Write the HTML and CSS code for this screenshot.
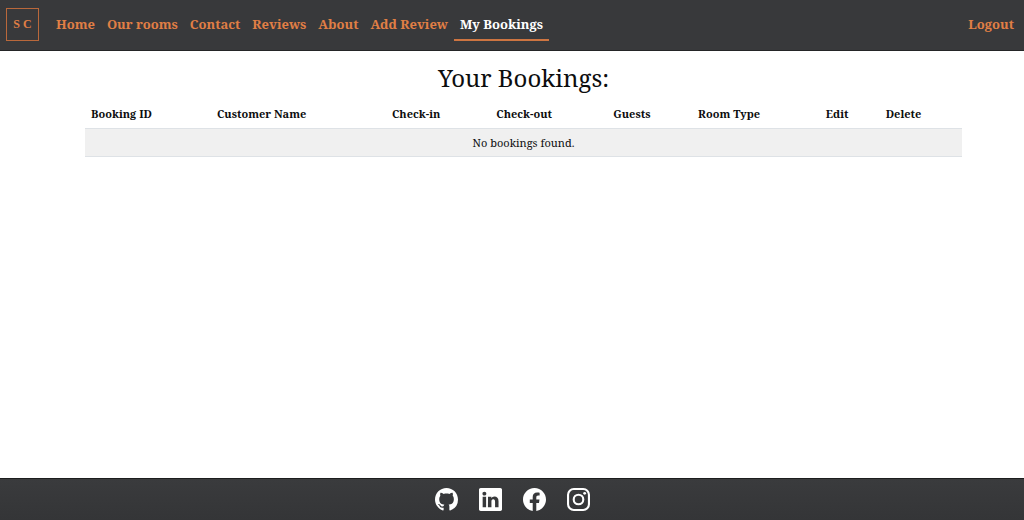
FILE: index.html
```html
<!DOCTYPE html>
<html lang="en">
<head>
<meta charset="utf-8">
<title>My Bookings</title>
<link rel="stylesheet" href="styles.css">
</head>
<body>
<header class="navbar">
  <a class="logo" href="#">S C</a>
  <nav class="menu">
    <a class="link" href="#">Home</a>
    <a class="link" href="#">Our rooms</a>
    <a class="link" href="#">Contact</a>
    <a class="link" href="#">Reviews</a>
    <a class="link" href="#">About</a>
    <a class="link" href="#">Add Review</a>
    <a class="link active" href="#" aria-current="page">My Bookings</a>
  </nav>
  <a class="link logout" href="#">Logout</a>
</header>
<main class="content">
  <h1 class="title">Your Bookings:</h1>
  <table class="bookings">
    <thead><tr><th>Booking ID</th><th>Customer Name</th><th>Check-in</th><th>Check-out</th><th>Guests</th><th>Room Type</th><th>Edit</th><th>Delete</th></tr></thead>
    <tbody><tr><td colspan="8">No bookings found.</td></tr></tbody>
  </table>
</main>
<footer class="footer">
  <a class="social" href="#" aria-label="GitHub"><svg viewBox="0 0 16 16"><path d="M8 0C3.58 0 0 3.58 0 8c0 3.54 2.29 6.53 5.47 7.59.4.07.55-.17.55-.38 0-.19-.01-.82-.01-1.49-2.01.37-2.53-.49-2.69-.94-.09-.23-.48-.94-.82-1.13-.28-.15-.68-.52-.01-.53.63-.01 1.08.58 1.23.82.72 1.21 1.87.87 2.33.66.07-.52.28-.87.51-1.07-1.78-.2-3.64-.89-3.64-3.95 0-.87.31-1.59.82-2.15-.08-.2-.36-1.02.08-2.12 0 0 .67-.21 2.2.82.64-.18 1.32-.27 2-.27s1.36.09 2 .27c1.53-1.04 2.2-.82 2.2-.82.44 1.1.16 1.92.08 2.12.51.56.82 1.27.82 2.15 0 3.07-1.87 3.75-3.65 3.95.29.25.54.73.54 1.48 0 1.07-.01 1.93-.01 2.2 0 .21.15.46.55.38A8.01 8.01 0 0 0 16 8c0-4.42-3.58-8-8-8"/></svg></a>
  <a class="social" href="#" aria-label="LinkedIn"><svg viewBox="0 0 16 16"><path d="M0 1.146C0 .513.526 0 1.175 0h13.65C15.474 0 16 .513 16 1.146v13.708c0 .633-.526 1.146-1.175 1.146H1.175C.526 16 0 15.487 0 14.854zm4.943 12.248V6.169H2.542v7.225zm-1.2-8.212c.837 0 1.358-.554 1.358-1.248-.015-.709-.52-1.248-1.342-1.248S2.4 3.226 2.4 3.934c0 .694.521 1.248 1.327 1.248zm4.908 8.212V9.359c0-.216.016-.432.08-.586.173-.431.568-.878 1.232-.878.869 0 1.216.662 1.216 1.634v3.865h2.401V9.25c0-2.22-1.184-3.252-2.764-3.252-1.274 0-1.845.7-2.165 1.193v.025h-.016l.016-.025V6.169h-2.4c.03.678 0 7.225 0 7.225z"/></svg></a>
  <a class="social" href="#" aria-label="Facebook"><svg viewBox="0 0 16 16"><path d="M16 8.049c0-4.446-3.582-8.05-8-8.05C3.58 0 0 3.603 0 8.05c0 4.017 2.926 7.347 6.75 7.951v-5.625H4.719V8.05H6.75V6.275c0-2.017 1.195-3.131 3.022-3.131.876 0 1.791.157 1.791.157v1.98h-1.009c-.993 0-1.303.621-1.303 1.258v1.51h2.218l-.354 2.326H9.25V16c3.824-.604 6.75-3.934 6.75-7.951"/></svg></a>
  <a class="social" href="#" aria-label="Instagram"><svg viewBox="0 0 24 24"><g fill="none" stroke="currentColor" stroke-width="2.2"><rect x="1.1" y="1.1" width="21.8" height="21.8" rx="6"/><circle cx="12" cy="12" r="5"/></g><circle cx="18.4" cy="5.6" r="1.5"/></svg></a>
</footer>
</body>
</html>
```

FILE: styles.css
```css
* { box-sizing: border-box; }
body {
  margin: 0;
  min-height: 100vh;
  display: flex;
  flex-direction: column;
  background: #fff;
  color: #0c0d0e;
  font-family: "Noto Serif", "Droid Serif", "DejaVu Serif", serif;
}
.navbar {
  display: flex;
  align-items: center;
  padding: 8px 4px 9px 6px;
  border-bottom: 1px solid #242527;
  background: #38393b;
}
.logo {
  display: flex;
  align-items: center;
  justify-content: center;
  width: 33px;
  height: 33px;
  border: 1px solid #b9683b;
  color: #e17f45;
  font: 700 12px "Liberation Serif", serif;
  text-decoration: none;
}
.menu { display: flex; margin-left: 11px; }
.link {
  padding: 2px 6px;
  border-bottom: 2px solid transparent;
  color: #e17f45;
  font-weight: 700;
  font-size: 13px;
  line-height: 26px;
  text-decoration: none;
  white-space: nowrap;
}
.active { color: #fff; border-color: #ce7541; }
.logout { margin-left: auto; }
.content { flex: 1; padding: 11px 62px 0 85px; }
.title { margin: 0 0 7px; font-weight: 400; font-size: 24px; line-height: 32px; text-align: center; }
.bookings { width: 100%; border-collapse: collapse; font-size: 11px; line-height: 16px; }
.bookings th { padding: 5px 6px 6px; text-align: left; border-bottom: 1px solid #dee2e6; white-space: nowrap; }
.bookings td { padding: 6px 6px 5px; text-align: center; background: #f0f0f0; border-bottom: 1px solid #dee2e6; }
.footer {
  display: flex;
  justify-content: center;
  align-items: center;
  gap: 21px;
  padding: 9px 0;
  border-top: 1px solid #1c1d1e;
  background: linear-gradient(#3a3b3d, #343537);
}
.social { color: #fff; }
.social svg { display: block; width: 23px; height: 23px; fill: currentColor; }
```
